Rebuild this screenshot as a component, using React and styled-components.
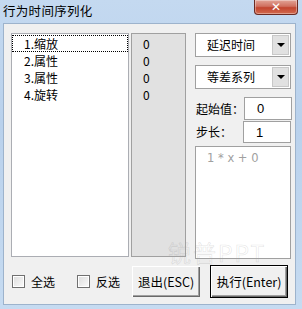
import React from 'react';
import styled, { createGlobalStyle } from 'styled-components';

const GlobalStyle = createGlobalStyle`
  html, body {
    margin: 0;
    padding: 0;
    background: #ffffff;
  }
  * {
    box-sizing: border-box;
  }
`;

const FONT = `"Noto Sans CJK SC", "DejaVu Sans", sans-serif`;

// WINDOW FRAME
const Window = styled.div`
  width: 302px;
  height: 309px;
  display: flex;
  flex-direction: column;
  background: linear-gradient(180deg, #c4d9f0 0%, #b9d1ec 40%, #c6dbf1 100%);
  font-family: ${FONT};
  font-size: 12px;
  color: #000;
  position: relative;
  overflow: hidden;
  white-space: nowrap;
`;

const TitleBar = styled.div`
  height: 23px;
  display: flex;
  align-items: flex-start;
  justify-content: space-between;
  padding: 0 4px 0 3px;
`;

const Title = styled.span`
  font-size: 12.5px;
  line-height: 22px;
  letter-spacing: 0.3px;
`;

const CloseButton = styled.div`
  width: 44px;
  height: 15px;
  border: 1px solid #6b2a22;
  border-top: none;
  border-radius: 0 0 4px 4px;
  background: linear-gradient(180deg, #e2a497 0%, #d0705f 45%, #c2452f 55%, #d26a4e 100%);
  display: flex;
  align-items: center;
  justify-content: center;
  color: #fff;
  font-family: "DejaVu Sans", sans-serif;
  font-weight: bold;
  font-size: 12px;
  line-height: 1;
  box-shadow: inset 0 0 0 1px rgba(255, 255, 255, 0.35);
`;

const Client = styled.div`
  flex: 1;
  margin: 0 6px 4px 3px;
  background: #f0f0f0;
  border: 1px solid #9db3cc;
  padding: 9px 5px 0 7px;
  display: flex;
  flex-direction: column;
`;

// MAIN AREA
const MainRow = styled.div`
  display: flex;
  height: 224px;
`;

const ListBox = styled.div`
  width: 118px;
  flex-shrink: 0;
  border: 1px solid #abadb3;
  background: #fff;
  padding: 1px 0;
`;

const ListItem = styled.div`
  height: 17px;
  line-height: 16px;
  padding-left: 11px;
  border: 1px dotted ${p => (p.$focused ? '#000' : 'transparent')};
`;

const ValueColumn = styled.div`
  width: 55px;
  flex-shrink: 0;
  margin-left: 2px;
  border: 1px solid #a0a0a0;
  background: #e1e1e1;
  padding: 1px 0 0 11px;
`;

const ValueItem = styled.div`
  height: 17px;
  line-height: 17px;
`;

const RightPanel = styled.div`
  width: 96px;
  flex-shrink: 0;
  margin-left: 9px;
  display: flex;
  flex-direction: column;
`;

const Combo = styled.div`
  height: 24px;
  border: 1px solid #a0a0a0;
  background: #fff;
  display: flex;
  align-items: stretch;
  margin-bottom: ${p => p.$gap || 0}px;
`;

const ComboText = styled.div`
  flex: 1;
  line-height: 22px;
  padding-left: 11px;
`;

const ComboButton = styled.div`
  width: 17px;
  margin: 1px;
  background: #e1e1e1;
  border: 1px solid #c8c8c8;
  display: flex;
  align-items: center;
  justify-content: center;
  &::after {
    content: '';
    border-left: 4px solid transparent;
    border-right: 4px solid transparent;
    border-top: 4px solid #000;
  }
`;

const FieldRow = styled.div`
  display: flex;
  align-items: center;
  height: ${p => p.$h}px;
  margin-bottom: 1px;
`;

const FieldLabel = styled.span`
  flex: 1;
  padding-left: 1px;
  line-height: 1;
`;

const FieldInput = styled.div`
  width: 48px;
  flex-shrink: 0;
  height: 100%;
  border: 1px solid #a0a0a0;
  background: #fff;
  padding-left: 12px;
  display: flex;
  align-items: center;
  font-family: "Liberation Sans", sans-serif;
  font-size: 13px;
`;

const Preview = styled.div`
  flex: 1;
  margin-top: 2px;
  border: 1px solid #a0a0a0;
  background: #fff;
  padding: 3px 0 0 11px;
  color: #a0a0a0;
  font-family: "DejaVu Sans", sans-serif;
  font-size: 11.5px;
  line-height: 16px;
  margin-bottom: -2px;
`;

// BOTTOM ROW
const BottomRow = styled.div`
  display: flex;
  align-items: center;
  margin-top: 8px;
  height: 33px;
`;

const CheckLabel = styled.label`
  display: flex;
  align-items: center;
  flex-shrink: 0;
  gap: 6px;
  margin-left: ${p => p.$left}px;
`;

const CheckBox = styled.span`
  width: 13px;
  height: 13px;
  flex-shrink: 0;
  border: 1px solid #707070;
  background: linear-gradient(135deg, #dcdcdc 0%, #fbfbfb 100%);
  box-shadow: inset 0 0 0 1px #fff;
`;

const Button = styled.div`
  height: 33px;
  width: ${p => p.$w}px;
  flex-shrink: 0;
  margin-left: ${p => p.$left}px;
  display: flex;
  align-items: center;
  justify-content: center;
  background: #f0f0f0;
  border: 1px solid ${p => (p.$default ? '#000' : 'transparent')};
  box-shadow: inset 1px 1px 0 #fff, inset -1px -1px 0 #696969, inset -2px -2px 0 #a0a0a0;
  font-size: 12.5px;
`;

// WATERMARK (overlay)
const Watermark = styled.div`
  position: absolute;
  left: 168px;
  top: 241px;
  font-family: ${FONT};
  font-size: 23px;
  line-height: 1;
  color: transparent;
  -webkit-text-stroke: 0.6px rgba(160, 160, 160, 0.3);
  pointer-events: none;
  letter-spacing: 2px;
`;

const items = ['1.缩放', '2.属性', '3.属性', '4.旋转'];

const App = () => {
  return (
    <>
      <GlobalStyle />
      <Window>
        <TitleBar>
          <Title>行为时间序列化</Title>
          <CloseButton>✕</CloseButton>
        </TitleBar>
        <Client>
          <MainRow>
            <ListBox>
              {items.map((item, i) => (
                <ListItem key={item} $focused={i === 0}>
                  {item}
                </ListItem>
              ))}
            </ListBox>
            <ValueColumn>
              {items.map(item => (
                <ValueItem key={item}>0</ValueItem>
              ))}
            </ValueColumn>
            <RightPanel>
              <Combo $gap={8}>
                <ComboText>延迟时间</ComboText>
                <ComboButton />
              </Combo>
              <Combo $gap={8}>
                <ComboText>等差系列</ComboText>
                <ComboButton />
              </Combo>
              <FieldRow $h={23}>
                <FieldLabel>起始值：</FieldLabel>
                <FieldInput>0</FieldInput>
              </FieldRow>
              <FieldRow $h={22}>
                <FieldLabel>步长：</FieldLabel>
                <FieldInput>1</FieldInput>
              </FieldRow>
              <Preview>1 * x + 0</Preview>
            </RightPanel>
          </MainRow>
          <BottomRow>
            <CheckLabel $left={1}>
              <CheckBox />
              全选
            </CheckLabel>
            <CheckLabel $left={22}>
              <CheckBox />
              反选
            </CheckLabel>
            <Button $w={70} $left={11}>退出(ESC)</Button>
            <Button $w={78} $left={9} $default>执行(Enter)</Button>
          </BottomRow>
        </Client>
        <Watermark>锐普PPT</Watermark>
      </Window>
    </>
  );
};

export default App;
